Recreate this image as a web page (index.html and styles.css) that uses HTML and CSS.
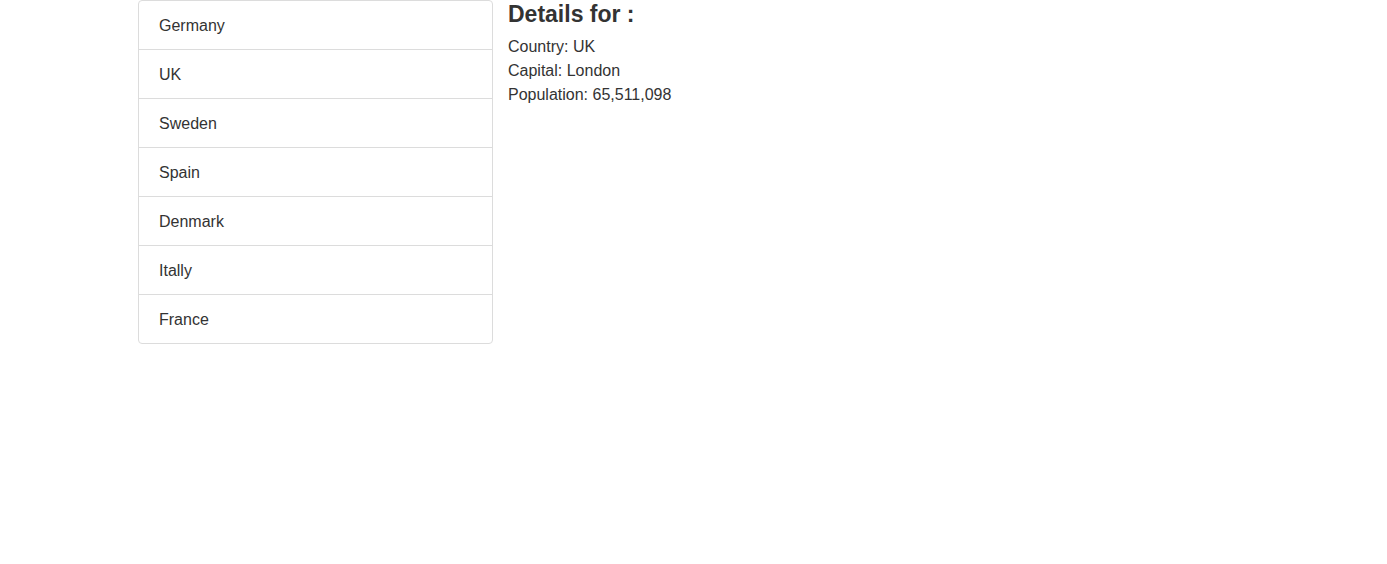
FILE: index.html
```html
<!DOCTYPE html>
<html>
<head>
<meta charset="utf-8">
<link rel="stylesheet" href="styles.css">
</head>
<body>
<div class="layout">
  <ul class="list-group">
    <li class="list-item">Germany</li>
    <li class="list-item">UK</li>
    <li class="list-item">Sweden</li>
    <li class="list-item">Spain</li>
    <li class="list-item">Denmark</li>
    <li class="list-item">Itally</li>
    <li class="list-item">France</li>
  </ul>
  <div class="details">
    <h4 class="details-title">Details for :</h4>
    <div class="details-line">Country: UK</div>
    <div class="details-line">Capital: London</div>
    <div class="details-line">Population: 65,511,098</div>
  </div>
</div>
</body>
</html>
```
FILE: styles.css
```css
html, body {
  margin: 0;
  padding: 0;
  background: #fff;
}
body {
  font-family: "Liberation Sans", Arial, sans-serif;
  font-size: 16px;
  line-height: 24px;
  color: #333;
}
.layout {
  display: flex;
  align-items: flex-start;
  gap: 15px;
  padding-left: 138px;
}
.list-group {
  list-style: none;
  margin: 0;
  padding: 0;
  width: 355px;
  box-sizing: border-box;
  border: 1px solid #dcdcdc;
  border-radius: 4px;
}
.list-item {
  padding: 13px 20px 11px;
  border-top: 1px solid #dcdcdc;
}
.list-item:first-child {
  border-top: none;
}
.details-title {
  margin: 0 0 6px 0;
  font-size: 23px;
  line-height: 29px;
  font-weight: bold;
  color: #333;
}
```
